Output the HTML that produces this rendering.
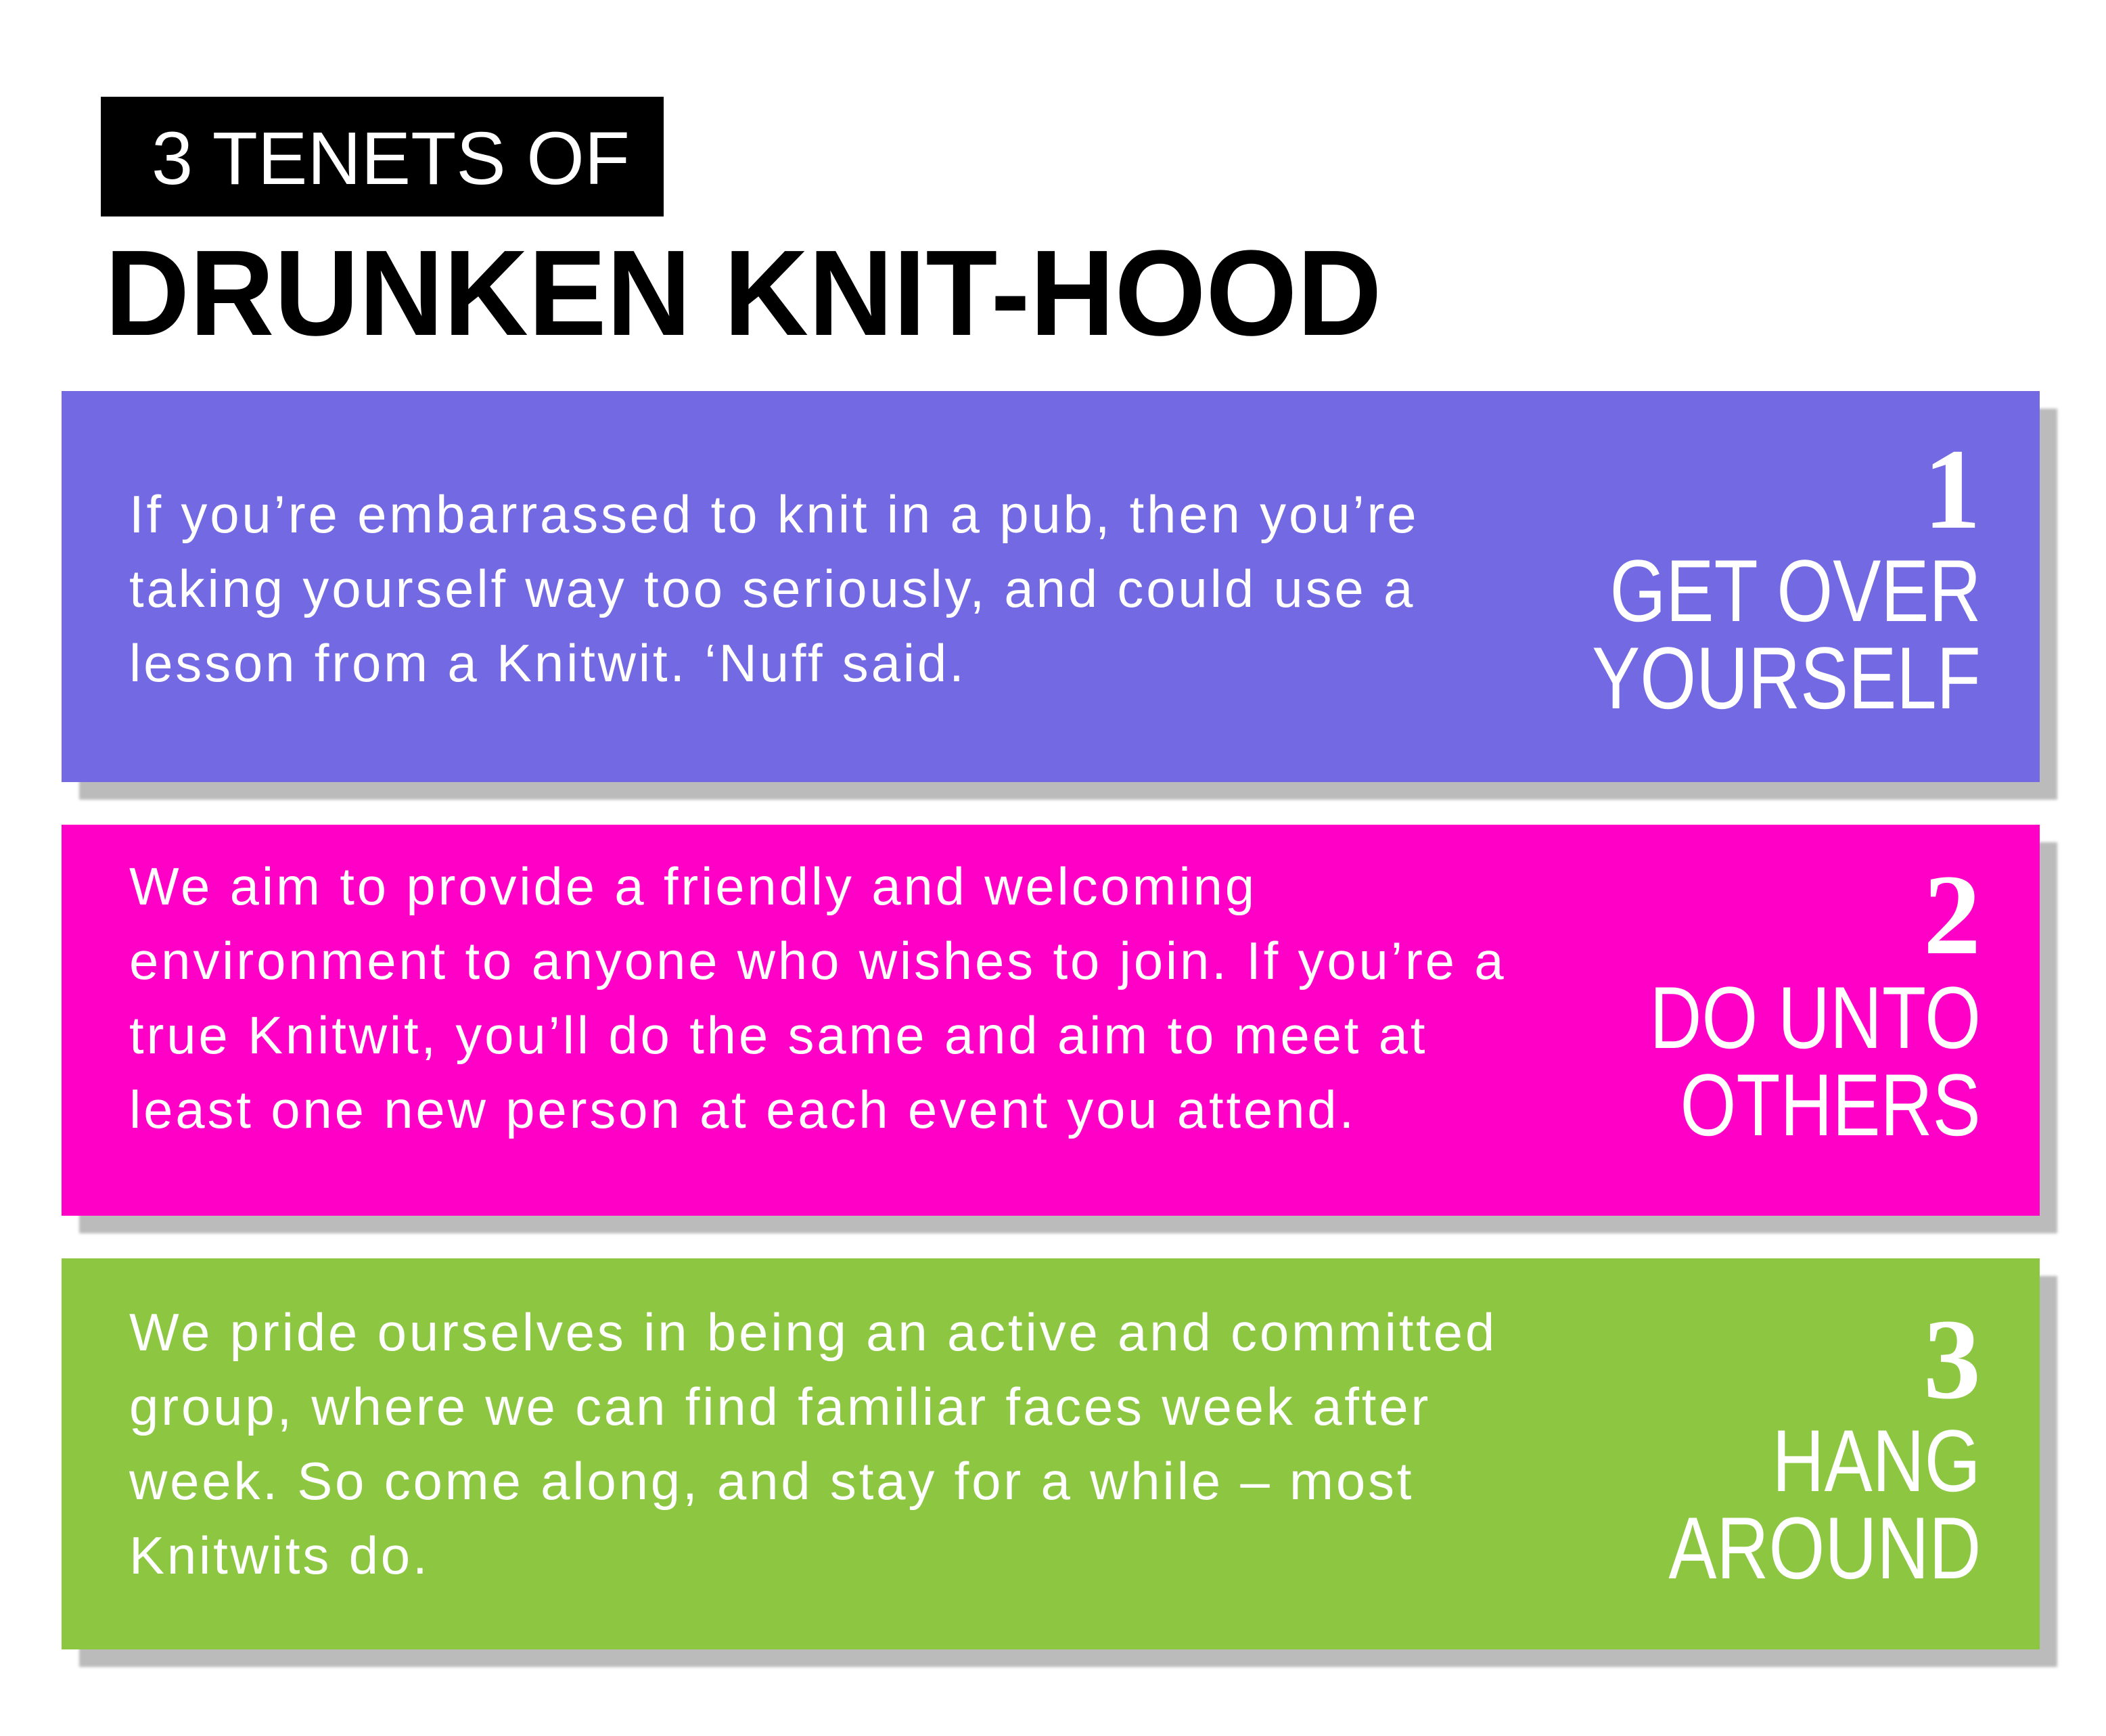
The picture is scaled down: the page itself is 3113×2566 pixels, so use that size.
<!DOCTYPE html>
<html><head><meta charset="utf-8"><style>
html,body{margin:0;padding:0;background:#fff;}
body{width:3113px;height:2566px;position:relative;overflow:hidden;font-family:"Liberation Sans",sans-serif;}
.abs{position:absolute;white-space:nowrap;}
.box{position:absolute;left:91px;width:2924px;height:578px;box-shadow:26px 26px 4px #bbbbbb;}
.body{position:absolute;left:191px;color:#fff;font-size:78px;line-height:110px;white-space:nowrap;letter-spacing:3.8px;}
.num{position:absolute;right:185px;color:#fff;font-family:"Liberation Serif",serif;font-weight:bold;font-size:170px;line-height:170px;}
.tt{position:absolute;right:185px;color:#fff;font-size:130px;line-height:130px;white-space:nowrap;transform:scaleX(0.82);transform-origin:right center;}
</style></head><body>
<div class="abs" style="left:149px;top:143px;width:832px;height:177px;background:#000;"></div>
<div class="abs" style="left:224px;top:180px;color:#fff;font-size:110px;line-height:110px;">3 TENETS OF</div>
<div class="abs" style="left:155px;top:344px;color:#000;font-size:180px;line-height:180px;font-weight:bold;transform:scaleX(0.963);transform-origin:left center;">DRUNKEN KNIT-HOOD</div>

<div class="box" style="top:578px;background:#736ae3;"></div>
<div class="body" style="top:705px;">If you’re embarrassed to knit in a pub, then you’re<br>taking yourself way too seriously, and could use a<br>lesson from a Knitwit. ‘Nuff said.</div>
<div class="num" style="top:638px;">1</div>
<div class="tt" style="top:808px;">GET OVER</div>
<div class="tt" style="top:937px;">YOURSELF</div>

<div class="box" style="top:1219px;background:#ff00c6;"></div>
<div class="body" style="top:1255px;">We aim to provide a friendly and welcoming<br>environment to anyone who wishes to join. If you’re a<br>true Knitwit, you’ll do the same and aim to meet at<br>least one new person at each event you attend.</div>
<div class="num" style="top:1267px;">2</div>
<div class="tt" style="top:1439px;">DO UNTO</div>
<div class="tt" style="top:1568px;">OTHERS</div>

<div class="box" style="top:1860px;background:#8dc741;"></div>
<div class="body" style="top:1914px;">We pride ourselves in being an active and committed<br>group, where we can find familiar faces week after<br>week. So come along, and stay for a while – most<br>Knitwits do.</div>
<div class="num" style="top:1924px;">3</div>
<div class="tt" style="top:2094px;">HANG</div>
<div class="tt" style="top:2223px;">AROUND</div>
</body></html>
